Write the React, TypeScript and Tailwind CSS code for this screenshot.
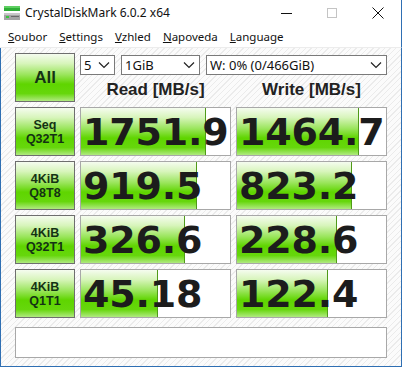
import React from 'react';

type Row = {
  top: string;
  bottom: string;
  read: string;
  readPct: number;
  write: string;
  writePct: number;
};

const rows: Row[] = [
  { top: 'Seq', bottom: 'Q32T1', read: '1751.9', readPct: 84, write: '1464.7', writePct: 82 },
  { top: '4KiB', bottom: 'Q8T8', read: '919.5', readPct: 78, write: '823.2', writePct: 77 },
  { top: '4KiB', bottom: 'Q32T1', read: '326.6', readPct: 70, write: '228.6', writePct: 67 },
  { top: '4KiB', bottom: 'Q1T1', read: '45.18', readPct: 52, write: '122.4', writePct: 61 },
];

const green =
  'bg-[linear-gradient(to_bottom,#f5fcef_0%,#d8f5bc_20%,#9ae55c_44%,#5fd500_64%,#66d70c_84%,#b0ea80_100%)]';

function Chevron() {
  return (
    <svg width="12" height="8" viewBox="0 0 12 8" className="shrink-0">
      <polyline points="1,1.5 6,6.5 11,1.5" fill="none" stroke="#222" strokeWidth="1.2" />
    </svg>
  );
}

function Select({ label, className }: { label: string; className: string }) {
  return (
    <div
      className={`h-[20px] flex items-center justify-between border border-[#7a7a7a] bg-white pl-[3px] pr-[4px] text-[13px] text-[#111] ${className}`}
    >
      <span className="leading-none">{label}</span>
      <Chevron />
    </div>
  );
}

function Cell({ value, pct }: { value: string; pct: number }) {
  return (
    <div className="relative h-[49px] border border-[#a8a8a8] bg-white overflow-hidden flex items-center">
      <div
        className={`absolute left-0 top-0 bottom-0 border-r border-[#4f9a18] ${green}`}
        style={{ width: `${pct}%` }}
      />
      <span className="relative pl-[2px] font-['DejaVu_Sans',sans-serif] font-bold text-[38px] leading-none text-[#1c1c1c] tracking-[-0.2px]">
        {value}
      </span>
    </div>
  );
}

function TestButton({ top, bottom }: { top: string; bottom: string }) {
  return (
    <div
      className={`h-[49px] border border-[#6e6e6e] ${green} flex flex-col items-center justify-center font-['Liberation_Sans',sans-serif] font-bold text-[12.5px] leading-[14px] text-[#143214]`}
    >
      <span>{top}</span>
      <span>{bottom}</span>
    </div>
  );
}

export default function App() {
  return (
    <div className="w-[402px] h-[367px] bg-white font-['Noto_Sans',sans-serif] overflow-hidden flex flex-col">
      {/* title bar */}
      <div className="h-[26px] flex items-center border-r border-[#2f6fb3] shrink-0">
        <svg width="17" height="16" viewBox="0 0 17 16" className="ml-[4px]">
          <rect x="0" y="1" width="16" height="5" fill="#2fae37" />
          <rect x="0" y="1" width="16" height="2" fill="#5fd062" />
          <rect x="0" y="8" width="16" height="7" fill="#a4a4a4" />
          <rect x="0" y="8" width="16" height="2" fill="#c8c8c8" />
          <rect x="2" y="11" width="3" height="2" fill="#3ac640" />
          <rect x="7" y="11" width="8" height="1" fill="#6a6a6a" />
        </svg>
        <span className="ml-[4px] text-[12px] text-[#111]">CrystalDiskMark 6.0.2 x64</span>
        <div className="ml-auto flex items-center h-full">
          <div className="w-[46px] h-full flex items-center justify-center">
            <div className="w-[11px] h-px bg-[#111]" />
          </div>
          <div className="w-[46px] h-full flex items-center justify-center">
            <div className="w-[10px] h-[10px] border border-[#c4c4c4]" />
          </div>
          <div className="w-[46px] h-full flex items-center justify-center">
            <svg width="12" height="12" viewBox="0 0 12 12">
              <path d="M0.5 0.5 L11.5 11.5 M11.5 0.5 L0.5 11.5" stroke="#111" strokeWidth="1" />
            </svg>
          </div>
        </div>
      </div>

      {/* menu bar */}
      <div className="h-[22px] flex items-center pl-[2px] text-[11.5px] text-[#111] border-r border-[#2f6fb3] border-b border-b-[#ececec] shrink-0">
        <span className="px-[6px]"><span className="underline">S</span>oubor</span>
        <span className="px-[6px]"><span className="underline">S</span>ettings</span>
        <span className="px-[6px]"><span className="underline">V</span>zhled</span>
        <span className="px-[6px]"><span className="underline">N</span>apoveda</span>
        <span className="px-[6px]"><span className="underline">L</span>anguage</span>
      </div>

      {/* main */}
      <div className="flex-1 border-l border-r border-b border-[#2f6fb3] bg-[repeating-linear-gradient(135deg,#fbfbfb_0px,#fbfbfb_3px,#ebebeb_3px,#ebebeb_4px)] pl-[14px] pt-[5px]">
        <div className="grid grid-cols-[60px_151px_151px] gap-[5px]">
          <div
            className={`h-[49px] border border-[#6e6e6e] ${green} flex items-center justify-center font-['Liberation_Sans',sans-serif] font-bold text-[17px] text-[#143214]`}
          >
            All
          </div>
          <div className="col-span-2 h-[49px] flex flex-col">
            <div className="flex gap-[6px] mt-[2px]">
              <Select label="5" className="w-[35px]" />
              <Select label="1GiB" className="w-[79px]" />
              <Select label="W: 0% (0/466GiB)" className="w-[181px]" />
            </div>
            <div className="flex-1 grid grid-cols-2 gap-[5px] font-['Liberation_Sans',sans-serif] font-bold text-[17px] text-[#222]">
              <div className="flex items-center justify-center pt-[2px]">Read [MB/s]</div>
              <div className="flex items-center justify-center pt-[2px]">Write [MB/s]</div>
            </div>
          </div>

          {rows.map((r, i) => (
            <React.Fragment key={i}>
              <TestButton top={r.top} bottom={r.bottom} />
              <Cell value={r.read} pct={r.readPct} />
              <Cell value={r.write} pct={r.writePct} />
            </React.Fragment>
          ))}
        </div>

        <div className="mt-[9px] w-[372px] h-[31px] border border-[#a8a8a8] bg-white" />
      </div>
    </div>
  );
}
